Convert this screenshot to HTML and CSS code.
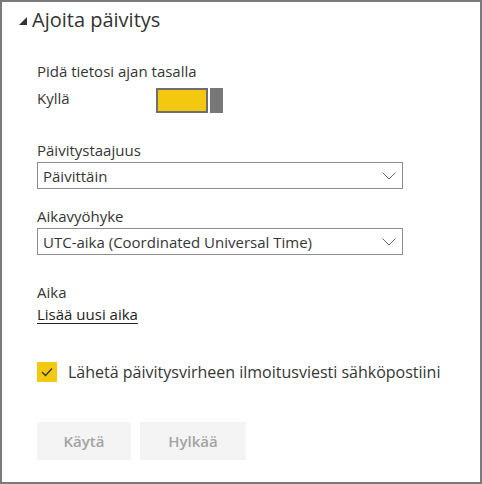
FILE: index.html
```html
<!DOCTYPE html>
<html lang="fi">
<head>
<meta charset="utf-8">
<title>Ajoita päivitys</title>
<link rel="stylesheet" href="styles.css">
</head>
<body>
<div class="panel">
  <div class="title">
    <svg class="tri" width="8" height="8" viewBox="0 0 8 8"><polygon points="8,0 8,8 0,8" fill="#333"/></svg>
    <span>Ajoita päivitys</span>
  </div>
  <div class="label l-keep">Pidä tietosi ajan tasalla</div>
  <div class="toggle-row">
    <span class="label toggle-label">Kyllä</span>
    <div class="toggle">
      <div class="track"></div>
      <div class="knob"></div>
    </div>
  </div>
  <div class="label l-freq">Päivitystaajuus</div>
  <div class="select">
    <span>Päivittäin</span>
    <svg width="14" height="8" viewBox="0 0 14 8"><polyline points="0.5,0.5 7,7 13.5,0.5" fill="none" stroke="#6a6a6a" stroke-width="1"/></svg>
  </div>
  <div class="label l-tz">Aikavyöhyke</div>
  <div class="select">
    <span>UTC-aika (Coordinated Universal Time)</span>
    <svg width="14" height="8" viewBox="0 0 14 8"><polyline points="0.5,0.5 7,7 13.5,0.5" fill="none" stroke="#6a6a6a" stroke-width="1"/></svg>
  </div>
  <div class="label l-time">Aika</div>
  <a class="link" href="#">Lisää uusi aika</a>
  <div class="check-row">
    <span class="checkbox">
      <svg width="12" height="10" viewBox="0 0 12 10"><polyline points="1,5 4.5,8.5 11,1.5" fill="none" stroke="#333" stroke-width="1.3"/></svg>
    </span>
    <span class="label check-label">Lähetä päivitysvirheen ilmoitusviesti sähköpostiini</span>
  </div>
  <div class="buttons">
    <button class="btn b-apply">Käytä</button>
    <button class="btn b-cancel">Hylkää</button>
  </div>
</div>
</body>
</html>
```

FILE: styles.css
```css
html, body {
  margin: 0;
  padding: 0;
  background: #fff;
}
body {
  font-family: "Open Sans", "Noto Sans", sans-serif;
  color: #363636;
}
.panel {
  width: 482px;
  height: 484px;
  box-sizing: border-box;
  border: 2px solid #7a7a7a;
  padding: 4px 0 0 35px;
  display: flex;
  flex-direction: column;
  align-items: flex-start;
}
.title {
  margin-left: -18px;
  display: flex;
  align-items: center;
  gap: 5px;
  font-size: 20px;
  line-height: 28px;
  color: #333;
}
.tri {
  margin-top: 2px;
}
.label {
  font-size: 15px;
  line-height: 20px;
  color: #363636;
}
.l-keep { margin-top: 27px; }
.toggle-row {
  display: flex;
  align-items: flex-start;
  margin-top: 7px;
}
.toggle-label {
  width: 119px;
}
.toggle {
  display: flex;
  gap: 2px;
}
.track {
  width: 52px;
  height: 25px;
  box-sizing: border-box;
  border: 2px solid #6e6e6e;
  background: #f2c811;
}
.knob {
  width: 13px;
  height: 25px;
  background: #777;
}
.l-freq { margin-top: 27px; }
.select {
  width: 366px;
  height: 27px;
  box-sizing: border-box;
  border: 1px solid #8c8c8c;
  display: flex;
  align-items: center;
  justify-content: space-between;
  padding: 0 6px 0 5px;
  font-size: 15px;
  color: #363636;
  margin-top: 2px;
}
.l-tz { margin-top: 17px; }
.l-time { margin-top: 27px; }
.link {
  font-size: 15px;
  line-height: 20px;
  color: #222;
  text-decoration: underline;
  text-underline-offset: 3px;
  margin-top: 2px;
}
.check-row {
  display: flex;
  align-items: center;
  gap: 11px;
  margin-top: 38px;
}
.checkbox {
  width: 20px;
  height: 20px;
  background: #f2c811;
  display: flex;
  align-items: center;
  justify-content: center;
}
.check-label {
  font-size: 16px;
}
.buttons {
  display: flex;
  gap: 9px;
  margin-top: 40px;
}
.btn {
  height: 38px;
  border: none;
  background: #f4f4f4;
  color: #a3a3a3;
  font-family: "Open Sans", "Noto Sans", sans-serif;
  font-size: 15px;
  font-weight: 600;
  padding: 0;
}
.b-apply { width: 94px; }
.b-cancel { width: 106px; }
```
